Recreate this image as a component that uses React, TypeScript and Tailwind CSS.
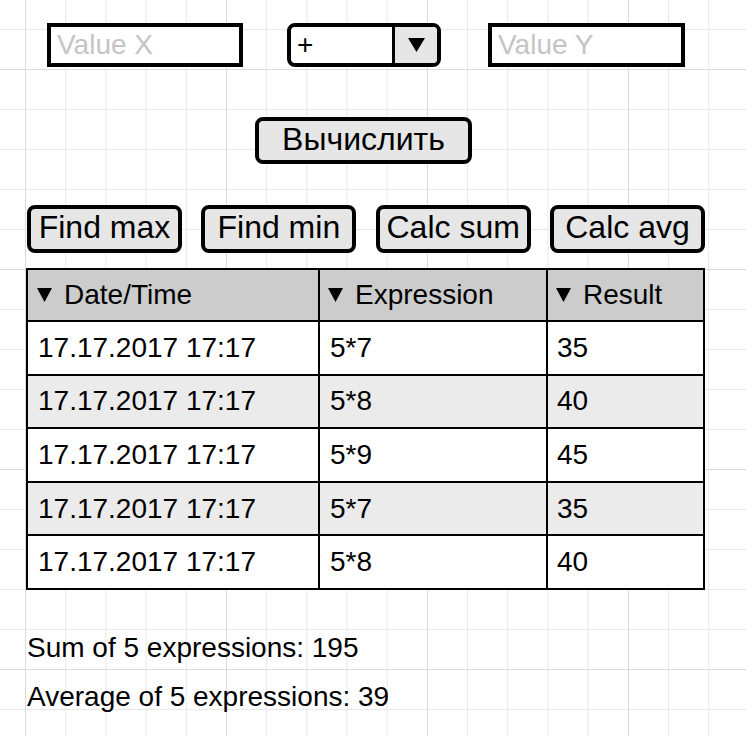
import React from "react";

const rows = [
  { date: "17.17.2017 17:17", expr: "5*7", result: "35" },
  { date: "17.17.2017 17:17", expr: "5*8", result: "40" },
  { date: "17.17.2017 17:17", expr: "5*9", result: "45" },
  { date: "17.17.2017 17:17", expr: "5*7", result: "35" },
  { date: "17.17.2017 17:17", expr: "5*8", result: "40" },
];

function SortArrow() {
  return (
    <svg width="15" height="14" viewBox="0 0 15 14" className="shrink-0 mr-[12px]">
      <polygon points="0,0 15,0 7.5,14" fill="#000" />
    </svg>
  );
}

function ActionButton({ label }: { label: string }) {
  return (
    <button className="w-[155px] h-[48px] border-4 border-black rounded-[8px] bg-[#e6e6e6] text-[32px] leading-none pb-[4px] flex items-center justify-center">
      {label}
    </button>
  );
}

export default function App() {
  return (
    <div className="w-[746px] h-[736px] overflow-hidden bg-white bg-[linear-gradient(to_right,#dcdcdc_1px,transparent_1px),linear-gradient(to_bottom,#dcdcdc_1px,transparent_1px),linear-gradient(to_right,#e8e8e8_1px,transparent_1px),linear-gradient(to_bottom,#e8e8e8_1px,transparent_1px)] bg-[size:201px_200px,201px_200px,40.2px_40px,40.2px_40px] bg-[position:25px_69px,25px_69px,25px_29px,25px_29px] font-['Liberation_Sans',Arial,sans-serif] text-black pt-[23px]">
      {/* inputs */}
      <div className="flex items-center h-[44px]">
        <input
          readOnly
          placeholder="Value X"
          className="ml-[47px] w-[196px] h-[44px] border-4 border-black bg-white px-[6px] text-[28px] outline-none placeholder:text-[#c4c4c4]"
        />
        <div className="ml-[44px] w-[154px] h-[44px] border-4 border-black rounded-[8px] overflow-hidden flex bg-white">
          <div className="flex-1 flex items-center pl-[6px] text-[28px]">+</div>
          <div className="w-[45px] border-l-[3px] border-black bg-[#e6e6e6] flex items-center justify-center pl-[1px]">
            <svg width="17" height="14" viewBox="0 0 17 14">
              <polygon points="0,0 17,0 8.5,14" fill="#000" />
            </svg>
          </div>
        </div>
        <input
          readOnly
          placeholder="Value Y"
          className="ml-[47px] w-[197px] h-[44px] border-4 border-black bg-white px-[6px] text-[28px] outline-none placeholder:text-[#c4c4c4]"
        />
      </div>

      {/* calculate */}
      <button className="mt-[50px] ml-[255px] w-[217px] h-[47px] border-4 border-black rounded-[8px] bg-[#e6e6e6] text-[32px] leading-none pb-[4px] flex items-center justify-center">
        Вычислить
      </button>

      {/* stats buttons */}
      <div className="mt-[41px] ml-[27px] w-[678px] flex justify-between">
        <ActionButton label="Find max" />
        <ActionButton label="Find min" />
        <ActionButton label="Calc sum" />
        <ActionButton label="Calc avg" />
      </div>

      {/* history table */}
      <div className="mt-[15px] ml-[26px] w-[679px] border-2 border-black bg-white text-[28px]">
        <div className="grid grid-cols-[290px_228px_157px] h-[50px] bg-[#cccccc]">
          <div className="flex items-center pl-[9px]">
            <SortArrow />
            Date/Time
          </div>
          <div className="flex items-center pl-[8px] border-l-2 border-black">
            <SortArrow />
            Expression
          </div>
          <div className="flex items-center pl-[8px] border-l-2 border-black">
            <SortArrow />
            Result
          </div>
        </div>
        {rows.map((r, i) => (
          <div
            key={i}
            className={`grid grid-cols-[290px_228px_157px] h-[53.6px] border-t-2 border-black ${i % 2 === 1 ? "bg-[#ebebeb]" : "bg-white"}`}
          >
            <div className="flex items-center pl-[10px]">{r.date}</div>
            <div className="flex items-center pl-[10px] border-l-2 border-black">{r.expr}</div>
            <div className="flex items-center pl-[9px] border-l-2 border-black">{r.result}</div>
          </div>
        ))}
      </div>

      {/* summary */}
      <div className="mt-[33px] ml-[27px] text-[28px] leading-[49px]">
        <div>Sum of 5 expressions: 195</div>
        <div>Average of 5 expressions: 39</div>
      </div>
    </div>
  );
}
